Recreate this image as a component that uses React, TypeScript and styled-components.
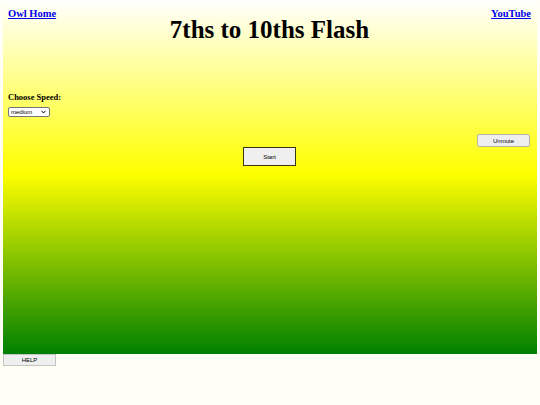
import styled, { createGlobalStyle } from "styled-components"

const GlobalStyle = createGlobalStyle`
  html, body {
    margin: 0;
    padding: 0;
    background: #fffff6;
    font-family: "Liberation Serif", "Times New Roman", serif;
  }
`

const Page = styled.div`
  width: 540px;
  padding: 0 3px;
  box-sizing: border-box;
`

const Stage = styled.div`
  height: 354px;
  background: linear-gradient(#ffffff 0%, #ffff00 49%, #008000 100%);
  padding: 8px 6px 0 5px;
  box-sizing: border-box;
`

const Header = styled.div`
  display: grid;
  grid-template-columns: 1fr auto 1fr;
  align-items: start;
`

const NavLink = styled.a<{ $right?: boolean }>`
  font-size: 10.5px;
  font-weight: bold;
  color: #0000ee;
  text-decoration: underline;
  justify-self: ${(p) => (p.$right ? "end" : "start")};
  line-height: 12px;
`

const Title = styled.h1`
  margin: 8px 0 0;
  font-size: 25px;
  line-height: 28px;
  font-weight: bold;
  color: #000;
`

const SpeedBlock = styled.div`
  margin-top: 48px;
  display: flex;
  flex-direction: column;
  align-items: flex-start;
  gap: 5px;
`

const Label = styled.div`
  font-size: 8.5px;
  font-weight: bold;
  line-height: 10px;
`

const SelectWrap = styled.div`
  position: relative;
  width: 42px;
  height: 10px;
`

const Select = styled.select`
  display: block;
  appearance: none;
  font-family: "Liberation Sans", Arial, sans-serif;
  font-size: 6px;
  width: 42px;
  height: 10px;
  padding: 0 0 0 2px;
  border: 1px solid #767676;
  border-radius: 2px;
  background: #fff;
  color: #000;
  line-height: 8px;
`

const Chevron = styled.svg`
  position: absolute;
  right: 4px;
  top: 3px;
  width: 5px;
  height: 4px;
  pointer-events: none;
`

const Controls = styled.div`
  margin-top: 17px;
  display: flex;
  flex-direction: column;
`

const Button = styled.button<{ $strong?: boolean }>`
  font-family: "Liberation Sans", Arial, sans-serif;
  font-size: 6px;
  width: 53px;
  height: ${(p) => (p.$strong ? "19px" : "13px")};
  background: #efefef;
  color: #000;
  border: 1px solid ${(p) => (p.$strong ? "#3a3a14" : "#b8b8a0")};
  border-radius: ${(p) => (p.$strong ? "0" : "2px")};
  padding: 0;
`

const UnmuteRow = styled.div`
  display: flex;
  justify-content: flex-end;
  padding-right: 1px;
`

const StartRow = styled.div`
  display: flex;
  justify-content: center;
`

const HelpButton = styled(Button)`
  height: 12px;
  display: block;
  border-color: #c4c4c4;
  border-radius: 0;
`

export default function App() {
  return (
    <>
      <GlobalStyle />
      <Page>
        <Stage>
          <Header>
            <NavLink href="#">Owl Home</NavLink>
            <Title>7ths to 10ths Flash</Title>
            <NavLink href="#" $right>
              YouTube
            </NavLink>
          </Header>
          <SpeedBlock>
            <Label>Choose Speed:</Label>
            <SelectWrap>
              <Select defaultValue="medium">
                <option value="slow">slow</option>
                <option value="medium">medium</option>
                <option value="fast">fast</option>
              </Select>
              <Chevron viewBox="0 0 5 4">
                <path d="M0.5 0.8 L2.5 3 L4.5 0.8" fill="none" stroke="#000" strokeWidth="1" />
              </Chevron>
            </SelectWrap>
          </SpeedBlock>
          <Controls>
            <UnmuteRow>
              <Button>Unmute</Button>
            </UnmuteRow>
            <StartRow>
              <Button $strong>Start</Button>
            </StartRow>
          </Controls>
        </Stage>
        <HelpButton>HELP</HelpButton>
      </Page>
    </>
  )
}
